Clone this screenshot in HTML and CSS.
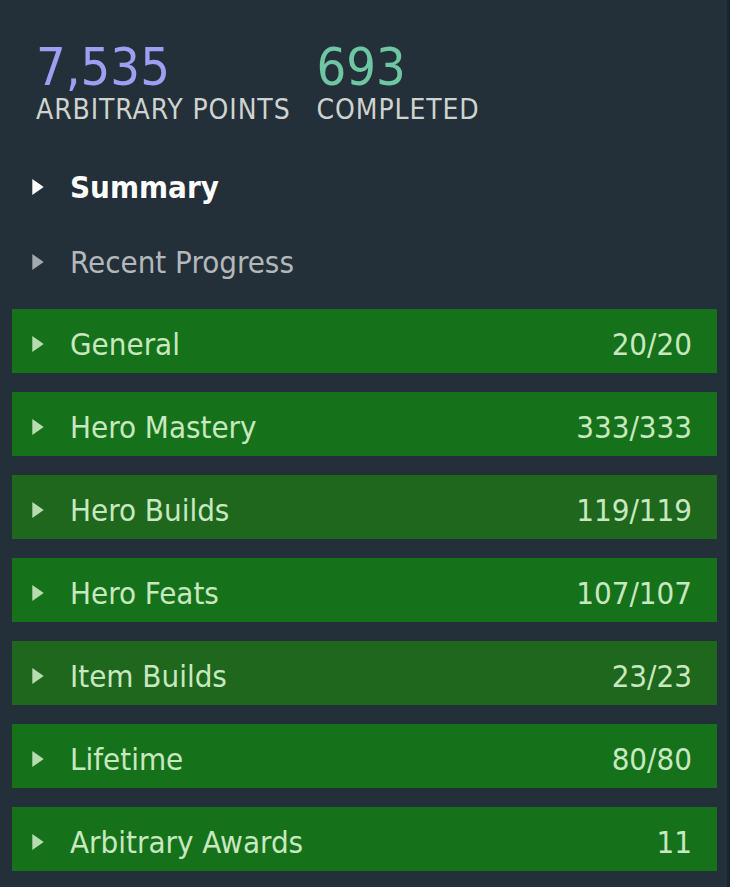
FILE: index.html
```html
<!DOCTYPE html>
<html>
<head>
<meta charset="utf-8">
<link rel="stylesheet" href="styles.css">
</head>
<body>
<div class="page">
  <div class="stats">
    <div class="stat">
      <div class="stat-value points">7,535</div>
      <div class="stat-label">ARBITRARY POINTS</div>
    </div>
    <div class="stat">
      <div class="stat-value completed">693</div>
      <div class="stat-label">COMPLETED</div>
    </div>
  </div>
  <nav class="nav">
    <div class="nav-item active"><svg class="tri" viewBox="0 0 10 14"><polygon points="0,0 10,7 0,14"/></svg><span>Summary</span></div>
    <div class="nav-item"><svg class="tri" viewBox="0 0 10 14"><polygon points="0,0 10,7 0,14"/></svg><span>Recent Progress</span></div>
  </nav>
  <div class="cats">
    <div class="cat"><svg class="tri" viewBox="0 0 10 14"><polygon points="0,0 10,7 0,14"/></svg><span class="cat-name">General</span><span class="cat-count">20/20</span></div>
    <div class="cat"><svg class="tri" viewBox="0 0 10 14"><polygon points="0,0 10,7 0,14"/></svg><span class="cat-name">Hero Mastery</span><span class="cat-count">333/333</span></div>
    <div class="cat dim"><svg class="tri" viewBox="0 0 10 14"><polygon points="0,0 10,7 0,14"/></svg><span class="cat-name">Hero Builds</span><span class="cat-count">119/119</span></div>
    <div class="cat"><svg class="tri" viewBox="0 0 10 14"><polygon points="0,0 10,7 0,14"/></svg><span class="cat-name">Hero Feats</span><span class="cat-count">107/107</span></div>
    <div class="cat dim"><svg class="tri" viewBox="0 0 10 14"><polygon points="0,0 10,7 0,14"/></svg><span class="cat-name">Item Builds</span><span class="cat-count">23/23</span></div>
    <div class="cat"><svg class="tri" viewBox="0 0 10 14"><polygon points="0,0 10,7 0,14"/></svg><span class="cat-name">Lifetime</span><span class="cat-count">80/80</span></div>
    <div class="cat"><svg class="tri" viewBox="0 0 10 14"><polygon points="0,0 10,7 0,14"/></svg><span class="cat-name">Arbitrary Awards</span><span class="cat-count">11</span></div>
  </div>
</div>
</body>
</html>
```

FILE: styles.css
```css
html, body {
  margin: 0;
  padding: 0;
  background: #232f39;
}
body {
  font-family: "DejaVu Sans Condensed", "DejaVu Sans", sans-serif;
  font-stretch: condensed;
}
.page {
  width: 727px;
  height: 887px;
  border-right: 3px solid #1b242c;
  background: #232f39;
  box-sizing: content-box;
  overflow: hidden;
}
.stats {
  display: flex;
  gap: 26px;
  padding: 42px 0 0 36px;
}
.stat {
  display: flex;
  flex-direction: column;
  gap: 3px;
}
.stat-value {
  font-size: 52px;
  line-height: 51px;
}
.points { color: #a09ef2; }
.completed { color: #6fc6a3; }
.stat-label {
  font-size: 28px;
  line-height: 27px;
  letter-spacing: 0.9px;
  color: #cfd3cf;
}
.nav {
  display: flex;
  flex-direction: column;
  margin-top: 26px;
}
.nav-item {
  display: flex;
  align-items: center;
  height: 75px;
  padding-left: 32px;
  font-size: 31px;
  color: #b3b8bb;
  fill: #a3a9ad;
}
.nav-item.active {
  color: #ffffff;
  font-weight: bold;
  fill: #ffffff;
}
.tri {
  width: 12px;
  height: 16px;
  flex: none;
  margin-right: 26px;
}
.cats {
  display: flex;
  flex-direction: column;
  gap: 19px;
  margin: 10px 0 0 12px;
  width: 705px;
}
.cat {
  display: flex;
  align-items: center;
  height: 64px;
  box-sizing: border-box;
  padding: 5px 25px 0 20px;
  background: #16721a;
  color: #c8e8c0;
  fill: #b6dcb0;
  font-size: 31px;
}
.cat.dim {
  background: #1e671c;
}
.cat-name {
  flex: 1;
}
.cat-count {
  text-align: right;
}
```
